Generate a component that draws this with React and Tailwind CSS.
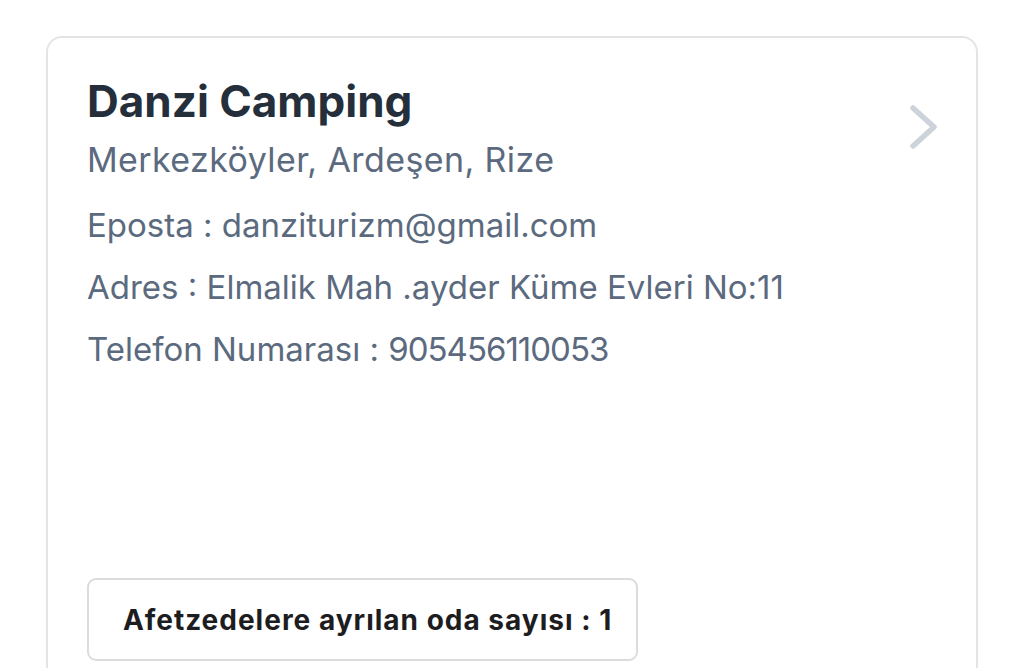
export default function App() {
  return (
    <div className="w-[1024px] h-[668px] overflow-hidden bg-white" style={{ fontFamily: "Inter, 'Noto Sans', sans-serif" }}>
      <div className="pt-[36px] pl-[46px] pr-[46px]">
        <div className="h-[700px] rounded-[16px] border-2 border-[#e3e4e6] bg-white pl-[39px] pr-[37px] pt-[37px]">
          <div className="flex items-start justify-between">
            <div>
              <div className="text-[44px] leading-[52px] font-bold text-[#252f3c]">Danzi Camping</div>
              <div className="mt-[13px] text-[34px] leading-[40px] tracking-[0.4px] text-[#5b6a7e]">Merkezköyler, Ardeşen, Rize</div>
            </div>
            <svg className="mt-[28px]" width="32" height="48" viewBox="0 0 32 48" fill="none">
              <path d="M6 5 L27 24 L6 43" stroke="#cdd3da" strokeWidth="5.5" strokeLinecap="round" strokeLinejoin="round" />
            </svg>
          </div>
          <div className="mt-[25px] flex flex-col gap-[22px] text-[33px] leading-[40px] text-[#5b6a7e]">
            <div>Eposta : danziturizm@gmail.com</div>
            <div>Adres : Elmalik Mah .ayder Küme Evleri No:11</div>
            <div>Telefon Numarası : <span className="tracking-[-1px]">905456110053</span></div>
          </div>
          <div className="mt-[209px] flex h-[83px] w-[551px] items-center rounded-[9px] border-2 border-[#dcdcdc] pl-[34px]">
            <span className="text-[28px] font-bold tracking-[1px] text-[#1d1d1f]">Afetzedelere ayrılan oda sayısı : 1</span>
          </div>
        </div>
      </div>
    </div>
  );
}
